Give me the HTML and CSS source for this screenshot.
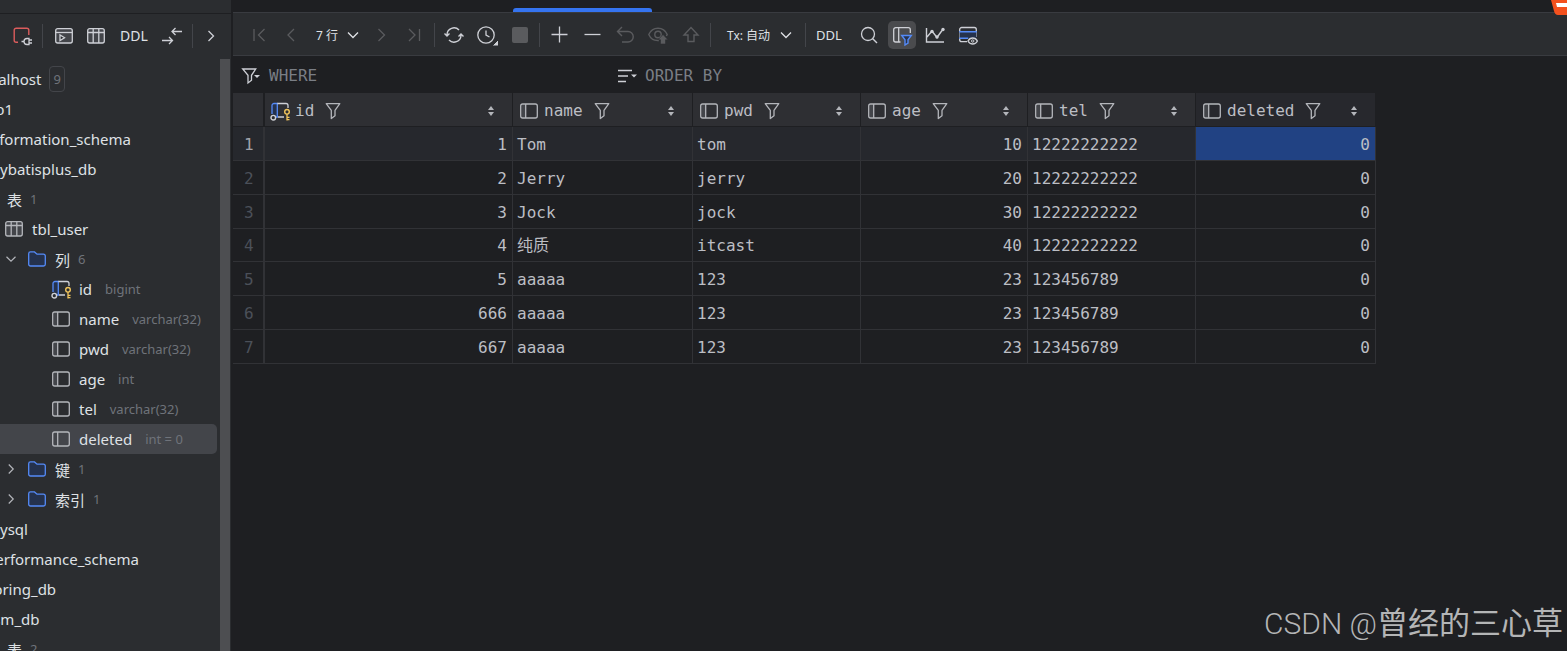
FILE: index.html
```
<!DOCTYPE html>
<html lang="zh-CN">
<head>
  <meta charset="UTF-8">
  <title>tbl_user</title>
  <link rel="stylesheet" href="styles.css">
</head>
<body>
  <svg class="sprite" aria-hidden="true">
    <symbol id="i-column" viewBox="0 0 20 20">
      <path d="M4.500 3.500H7v13H4.500a2 2 0 0 1-2-2v-9a2 2 0 0 1 2-2z" fill="#43454a"/>
      <rect x="1.700" y="3" width="16.600" height="14" rx="2" fill="none" stroke="currentColor" stroke-width="1.300"/>
      <path d="M6.700 3v14" stroke="currentColor" stroke-width="1.300"/>
    </symbol>
    <symbol id="i-key-column" viewBox="0 0 20 20">
      <path d="M2 13V4.500A2 2 0 0 1 4 2.500h3.300V16H6" fill="#25324d" stroke="#548af7" stroke-width="1.300"/>
      <path d="M7.300 2.500H16a2 2 0 0 1 2 2V7M8 16h6" fill="none" stroke="#ced0d6" stroke-width="1.300"/>
      <circle cx="3.300" cy="16.700" r="2.300" fill="#2b2d30" stroke="#ced0d6" stroke-width="1.400"/>
      <path d="M17 13v6.500M17 16.300h2.500M17 18.700h2.500" fill="none" stroke="#f2c55c" stroke-width="1.300"/>
      <circle cx="17" cy="10.800" r="2.300" fill="#2b2d30" stroke="#f2c55c" stroke-width="1.400"/>
    </symbol>
    <symbol id="i-table" viewBox="0 0 20 20">
      <rect x="1.700" y="2.700" width="16.600" height="14.300" rx="2" fill="#43454a" stroke="currentColor" stroke-width="1.300"/>
      <path d="M2 6.500h16M7.200 3v14M12.800 3v14" stroke="currentColor" stroke-width="1.300"/>
    </symbol>
    <symbol id="i-folder" viewBox="0 0 20 20">
      <path d="M1.700 4.700a1.800 1.800 0 0 1 1.800-1.800h4L10 5.200h6.500A1.800 1.800 0 0 1 18.300 7v8.200a1.800 1.800 0 0 1-1.800 1.800h-13a1.800 1.800 0 0 1-1.800-1.800z" fill="#25324d" stroke="#548af7" stroke-width="1.300"/>
    </symbol>
    <symbol id="i-down" viewBox="0 0 20 20">
      <path d="M5 7.500l5 5 5-5" fill="none" stroke="currentColor" stroke-width="1.300"/>
    </symbol>
    <symbol id="i-right" viewBox="0 0 20 20">
      <path d="M7.500 5l5 5-5 5" fill="none" stroke="currentColor" stroke-width="1.300"/>
    </symbol>
    <symbol id="i-prev" viewBox="0 0 20 20">
      <path d="M12 4l-6 6 6 6" fill="none" stroke="currentColor" stroke-width="1.300"/>
    </symbol>
    <symbol id="i-next" viewBox="0 0 20 20">
      <path d="M6.500 4l6 6-6 6" fill="none" stroke="currentColor" stroke-width="1.300"/>
    </symbol>
    <symbol id="i-first" viewBox="0 0 20 20">
      <path d="M5 4v12M15.500 4l-6 6 6 6" fill="none" stroke="currentColor" stroke-width="1.300"/>
    </symbol>
    <symbol id="i-last" viewBox="0 0 20 20">
      <path d="M14.500 4v12M4 4l6 6-6 6" fill="none" stroke="currentColor" stroke-width="1.300"/>
    </symbol>
    <symbol id="i-filter" viewBox="0 0 20 20">
      <path d="M3.200 2.700h13.600L12 9.300v5.500L8.300 17.500V9.300z" fill="none" stroke="currentColor" stroke-width="1.300" stroke-linejoin="round"/>
    </symbol>
    <symbol id="i-sort" viewBox="0 0 8 12">
      <path d="M4 1l3 4H1zM4 11l3-4H1z" fill="currentColor"/>
    </symbol>
  </svg>

  <div class="app">
    <aside class="sidebar">
      <div class="side-head"></div>
      <div class="side-toolbar">
        <button class="tool" aria-label="断开连接"><svg viewBox="0 0 20 20"><path d="M6 16.300H4.200a2 2 0 0 1-2-2V4.200a2 2 0 0 1 2-2h10.600a2 2 0 0 1 2 2V9" fill="none" stroke="#db5c5c" stroke-width="1.400"/><path d="M17 12.500h-2a3 3 0 0 0 0 6h2zM17 14h3M17 17h3M12 15.500H9.500" fill="none" stroke="#ced0d6" stroke-width="1.300"/></svg></button>
        <span class="sep"></span>
        <button class="tool" aria-label="查询控制台"><svg viewBox="0 0 20 20"><rect x="1.700" y="2.700" width="16.600" height="14.300" rx="2" fill="#43454a" stroke="#ced0d6" stroke-width="1.300"/><path d="M2 6.500h16" stroke="#ced0d6" stroke-width="1.300"/><path d="M6 9v5.500l4.500-2.700z" fill="#2b2d30" stroke="#ced0d6" stroke-width="1.300"/></svg></button>
        <button class="tool" aria-label="表"><svg><use href="#i-table"/></svg></button>
        <button class="tool ddl">DDL</button>
        <button class="tool" aria-label="跳转"><svg viewBox="0 0 20 20"><path d="M20 5.500h-10M13.500 2L10 5.500 13.500 9M0 14.500h10.500M7 11l3.500 3.500L7 18" fill="none" stroke="#ced0d6" stroke-width="1.300"/></svg></button>
        <span class="sep"></span>
        <button class="tool more" aria-label="更多"><svg><use href="#i-right"/></svg></button>
      </div>
      <div class="side-body">
        <ul class="tree">
          <li class="host">localhost <span class="badge">9</span></li>
          <li class="schema">db1</li>
          <li class="schema">information_schema</li>
          <li class="schema">mybatisplus_db</li>
          <li class="group">表 <span class="count">1</span></li>
          <li class="table"><svg><use href="#i-table"/></svg>tbl_user</li>
          <li class="folder"><svg class="arrow"><use href="#i-down"/></svg><svg><use href="#i-folder"/></svg>列 <span class="count">6</span></li>
          <li class="column"><svg><use href="#i-key-column"/></svg>id <span class="type">bigint</span></li>
          <li class="column"><svg><use href="#i-column"/></svg>name <span class="type">varchar(32)</span></li>
          <li class="column"><svg><use href="#i-column"/></svg>pwd <span class="type">varchar(32)</span></li>
          <li class="column"><svg><use href="#i-column"/></svg>age <span class="type">int</span></li>
          <li class="column"><svg><use href="#i-column"/></svg>tel <span class="type">varchar(32)</span></li>
          <li class="column selected"><svg><use href="#i-column"/></svg>deleted <span class="type">int = 0</span></li>
          <li class="folder"><svg class="arrow"><use href="#i-right"/></svg><svg><use href="#i-folder"/></svg>键 <span class="count">1</span></li>
          <li class="folder"><svg class="arrow"><use href="#i-right"/></svg><svg><use href="#i-folder"/></svg>索引 <span class="count">1</span></li>
          <li class="schema">mysql</li>
          <li class="schema">performance_schema</li>
          <li class="schema">spring_db</li>
          <li class="schema">ssm_db</li>
          <li class="group">表 <span class="count">2</span></li>
        </ul>
        <div class="scrollbar"></div>
      </div>
    </aside>

    <main class="main">
      <div class="tabs"><span class="tab-line"></span></div>
      <div class="toolbar">
        <button class="tool" disabled aria-label="第一页"><svg><use href="#i-first"/></svg></button>
        <button class="tool" disabled aria-label="上一页"><svg><use href="#i-prev"/></svg></button>
        <button class="tool rows">7 行<svg><use href="#i-down"/></svg></button>
        <button class="tool" disabled aria-label="下一页"><svg><use href="#i-next"/></svg></button>
        <button class="tool" disabled aria-label="最后一页"><svg><use href="#i-last"/></svg></button>
        <span class="sep"></span>
        <button class="tool" aria-label="刷新"><svg viewBox="0 0 20 20"><path d="M3 11V9.500a7 7 0 0 1 12-4.500M17 9v1.500a7 7 0 0 1-12 4.500M.500 8.500L3 11l2.500-2.500M14.500 11.500L17 9l2.500 2.500" fill="none" stroke="currentColor" stroke-width="1.400"/></svg></button>
        <button class="tool" aria-label="历史"><svg viewBox="0 0 20 20"><circle cx="9" cy="10" r="8.200" fill="none" stroke="currentColor" stroke-width="1.300"/><path d="M9 5.500V10l3.500 2" fill="none" stroke="currentColor" stroke-width="1.300"/><path d="M21.500 14.500v6.500h-6.500z" fill="currentColor" stroke="#2b2d30"/></svg></button>
        <button class="tool" disabled aria-label="停止"><svg viewBox="0 0 20 20"><rect x="2" y="2" width="16" height="16" rx="2" fill="currentColor"/></svg></button>
        <span class="sep"></span>
        <button class="tool" aria-label="添加行"><svg viewBox="0 0 20 20"><path d="M10.500 1.500v16M2.500 9.500h16" stroke="currentColor" stroke-width="1.300"/></svg></button>
        <button class="tool" aria-label="删除行"><svg viewBox="0 0 20 20"><path d="M2.500 9.500h16" stroke="currentColor" stroke-width="1.300"/></svg></button>
        <button class="tool" disabled aria-label="还原"><svg viewBox="0 0 20 20"><path d="M7 2L2.500 6.500 7 11M2.500 6.500H13a5 5 0 0 1 0 10.500H7" fill="none" stroke="currentColor" stroke-width="1.400"/></svg></button>
        <button class="tool" disabled aria-label="预览更改"><svg viewBox="0 0 20 20"><path d="M11 15.500C6 16 2.500 13.500.800 9.500 2.500 5.500 6 3.200 10 3.200s7.500 2.300 9.200 6.300l-.800 1.500" fill="none" stroke="currentColor" stroke-width="1.400"/><circle cx="10" cy="9.500" r="3.200" fill="none" stroke="currentColor" stroke-width="1.400"/><path d="M15 9.500l5 5.300h-2.500V19h-5v-4.200H10z" fill="currentColor" stroke="#2b2d30" stroke-width=".600"/></svg></button>
        <button class="tool" disabled aria-label="提交"><svg viewBox="0 0 20 20"><path d="M10 2.500l7 7.500h-4v6.500H7V10H3z" fill="none" stroke="currentColor" stroke-width="1.400"/></svg></button>
        <span class="sep"></span>
        <button class="tool tx">Tx: 自动<svg><use href="#i-down"/></svg></button>
        <span class="sep"></span>
        <button class="tool ddl">DDL</button>
        <button class="tool" aria-label="搜索"><svg viewBox="0 0 20 20"><circle cx="9" cy="9" r="6.500" fill="none" stroke="currentColor" stroke-width="1.300"/><path d="M13.500 13.500l4.500 4.500" stroke="currentColor" stroke-width="1.400"/></svg></button>
        <button class="tool active" aria-label="筛选"><svg viewBox="0 0 20 20"><path d="M8.500 17H3.700a2 2 0 0 1-2-2V4.700a2 2 0 0 1 2-2h12.600a2 2 0 0 1 2 2V8M6.700 2.700V17" fill="none" stroke="currentColor" stroke-width="1.300"/><path d="M9.700 10.500h9.600L16 14.800v3.400L13 20v-5.200z" fill="#25324d" stroke="#548af7" stroke-width="1.400"/></svg></button>
        <button class="tool" aria-label="图表"><svg viewBox="0 0 20 20"><path d="M1.500 3v14H19M2 12l5-6 5 6.500 5-7" fill="none" stroke="currentColor" stroke-width="1.400"/><circle cx="7" cy="6.500" r="1.700" fill="currentColor"/><circle cx="12" cy="12" r="1.700" fill="currentColor"/><circle cx="18" cy="4.500" r="1.700" fill="currentColor"/></svg></button>
        <button class="tool" aria-label="查看设置"><svg viewBox="0 0 20 20"><path d="M9 16.700H3.700a2 2 0 0 1-2-2V4.500a2 2 0 0 1 2-2h12.600a2 2 0 0 1 2 2V12" fill="none" stroke="currentColor" stroke-width="1.300"/><path d="M1.500 6.700h17v6.500h-17z" fill="#25324d"/><path d="M1.200 6.700h17.600M1.200 13.200h9" stroke="#548af7" stroke-width="1.400"/><path d="M10 16c1-2 2.700-3 4.700-3s3.700 1 4.700 3c-1 2-2.700 3-4.700 3s-3.700-1-4.700-3z" fill="#2b2d30" stroke="currentColor" stroke-width="1.300"/><circle cx="14.700" cy="16" r="1.200" fill="none" stroke="currentColor"/></svg></button>
      </div>

      <div class="query">
        <div class="query-part where">
          <svg viewBox="0 0 20 20"><path d="M1.700 3h13L10.500 9.300v5L7 17V9.300z" fill="none" stroke="currentColor" stroke-width="1.300"/><path d="M13 9h6l-3 3z" fill="currentColor"/></svg>
          <label for="where">WHERE</label>
          <input type="text" id="where">
        </div>
        <div class="query-part">
          <svg viewBox="0 0 20 20"><path d="M1 4.500h14M1 10h10M1 15.500h8" stroke="currentColor" stroke-width="1.400"/><path d="M14 8.500h6l-3 3z" fill="currentColor"/></svg>
          <label for="order">ORDER BY</label>
          <input type="text" id="order">
        </div>
      </div>

      <table class="grid">
        <colgroup>
          <col class="c-num"><col class="c-id"><col class="c-name"><col class="c-pwd"><col class="c-age"><col class="c-tel"><col class="c-deleted">
        </colgroup>
        <thead>
          <tr>
            <th></th>
            <th><div class="head key"><svg><use href="#i-key-column"/></svg>id<svg class="filter"><use href="#i-filter"/></svg><svg class="sort"><use href="#i-sort"/></svg></div></th>
            <th><div class="head"><svg><use href="#i-column"/></svg>name<svg class="filter"><use href="#i-filter"/></svg><svg class="sort"><use href="#i-sort"/></svg></div></th>
            <th><div class="head"><svg><use href="#i-column"/></svg>pwd<svg class="filter"><use href="#i-filter"/></svg><svg class="sort"><use href="#i-sort"/></svg></div></th>
            <th><div class="head"><svg><use href="#i-column"/></svg>age<svg class="filter"><use href="#i-filter"/></svg><svg class="sort"><use href="#i-sort"/></svg></div></th>
            <th><div class="head"><svg><use href="#i-column"/></svg>tel<svg class="filter"><use href="#i-filter"/></svg><svg class="sort"><use href="#i-sort"/></svg></div></th>
            <th class="current"><div class="head"><svg><use href="#i-column"/></svg>deleted<svg class="filter"><use href="#i-filter"/></svg><svg class="sort"><use href="#i-sort"/></svg></div></th>
          </tr>
        </thead>
        <tbody>
          <tr class="current"><th>1</th><td class="num">1</td><td>Tom</td><td>tom</td><td class="num">10</td><td>12222222222</td><td class="num picked">0</td></tr>
          <tr><th>2</th><td class="num">2</td><td>Jerry</td><td>jerry</td><td class="num">20</td><td>12222222222</td><td class="num">0</td></tr>
          <tr><th>3</th><td class="num">3</td><td>Jock</td><td>jock</td><td class="num">30</td><td>12222222222</td><td class="num">0</td></tr>
          <tr><th>4</th><td class="num">4</td><td>纯质</td><td>itcast</td><td class="num">40</td><td>12222222222</td><td class="num">0</td></tr>
          <tr><th>5</th><td class="num">5</td><td>aaaaa</td><td>123</td><td class="num">23</td><td>123456789</td><td class="num">0</td></tr>
          <tr><th>6</th><td class="num">666</td><td>aaaaa</td><td>123</td><td class="num">23</td><td>123456789</td><td class="num">0</td></tr>
          <tr><th>7</th><td class="num">667</td><td>aaaaa</td><td>123</td><td class="num">23</td><td>123456789</td><td class="num">0</td></tr>
        </tbody>
      </table>
    </main>
  </div>

  <svg class="corner" viewBox="0 0 16 15" aria-hidden="true"><path d="M0 0h16v15H7q-3 0-4-4z" fill="#f4511e"/><path d="M5 3h11v4H6z" fill="#fff"/></svg>
  <div class="watermark"><span>CSDN @</span>曾经的三心草</div>
</body>
</html>
```
FILE: styles.css
```
* {
  box-sizing: border-box;
}
body {
  margin: 0;
  background: #1e1f22;
  color: #dfe1e5;
  font-family: "Noto Sans", "Noto Sans CJK SC", sans-serif;
  font-size: 15px;
  overflow: hidden;
}
svg {
  width: 20px;
  height: 20px;
  flex: none;
  overflow: visible;
}
.sprite {
  position: absolute;
  width: 0;
  height: 0;
}
.app {
  display: flex;
  height: 100vh;
}

/* database tree */
.sidebar {
  flex: 0 0 233px;
  display: flex;
  flex-direction: column;
  background: #2b2d30;
  border-right: 2px solid #1e1f22;
  overflow: hidden;
}
.side-head {
  flex: none;
  height: 14px;
  border-bottom: 1px solid #1e1f22;
}
.side-toolbar {
  flex: none;
  display: flex;
  align-items: center;
  gap: 4px;
  height: 45px;
  padding: 0 0 2px 8px;
}
.side-body {
  flex: 1;
  display: flex;
  min-height: 0;
}
.tree {
  flex: 1;
  min-width: 0;
  margin: 0;
  padding: 5px 3px 0 0;
  list-style: none;
  overflow: hidden;
}
.tree li {
  display: flex;
  align-items: center;
  height: 30px;
  white-space: nowrap;
}
.tree svg {
  color: #b4b6bb;
  margin-right: 8px;
}
.tree svg.arrow {
  width: 18px;
  height: 18px;
  margin-right: 7px;
}
.tree .host {
  margin-left: -22px;
}
.tree .schema {
  margin-left: -14px;
}
.tree .group {
  padding-left: 7px;
}
.tree .table {
  padding-left: 4px;
}
.tree .folder {
  padding-left: 2px;
}
.tree .column {
  padding-left: 51px;
}
.tree .selected {
  background: #43454a;
  border-radius: 0 5px 5px 0;
}
.type,
.count {
  color: #6f737a;
  font-size: 13px;
}
.type {
  margin-left: 13px;
}
.count {
  margin-left: 8px;
}
.badge {
  margin-left: 8px;
  padding: 0 3px;
  border: 1px solid #43454a;
  border-radius: 4px;
  color: #6f737a;
  font-size: 13px;
  line-height: 24px;
}
.scrollbar {
  width: 10px;
  margin-right: 1px;
  background: #4d4e51;
}

/* toolbars */
.tool {
  display: flex;
  align-items: center;
  justify-content: center;
  flex: none;
  width: 28px;
  height: 28px;
  padding: 0;
  border: none;
  border-radius: 5px;
  background: none;
  color: #ced0d6;
  font: 13px "Noto Sans", "Noto Sans CJK SC", sans-serif;
  white-space: nowrap;
}
.tool:disabled {
  color: #5a5b5e;
}
.tool.active {
  background: #4a4b4e;
}
.sep {
  flex: none;
  width: 1px;
  height: 24px;
  background: #43454a;
}
.side-toolbar .sep {
  margin: 0 3px 0 2px;
}
.side-toolbar .ddl {
  width: 40px;
  color: #dfe1e5;
  font-size: 14px;
}
.side-toolbar .more {
  width: 22px;
}
.main {
  flex: 1;
  min-width: 0;
}
.tabs {
  display: flex;
  align-items: flex-end;
  height: 13px;
  padding-left: 280px;
  border-bottom: 1px solid #393b40;
}
.tab-line {
  width: 139px;
  height: 4px;
  border-radius: 3px 3px 0 0;
  background: #3574f0;
}
.toolbar {
  display: flex;
  align-items: center;
  gap: 5px;
  height: 43px;
  padding: 2px 0 0 12px;
  background: #2b2d30;
  border-bottom: 1px solid #393b40;
}
.toolbar .rows,
.toolbar .tx {
  justify-content: space-between;
  color: #dfe1e5;
  font-size: 12px;
}
.toolbar .rows {
  width: 52px;
  padding-left: 5px;
}
.toolbar .tx {
  width: 84px;
  padding: 0 4px 0 11px;
}
.toolbar .ddl {
  width: 39px;
  padding-right: 3px;
  color: #dfe1e5;
}

/* where / order by */
.query {
  display: flex;
  height: 37px;
  padding: 2px 0 0 8px;
  color: #ced0d6;
  font: 16px "DejaVu Sans Mono", monospace;
}
.query-part {
  flex: 1;
  display: flex;
  align-items: center;
  gap: 8px;
}
.query-part.where {
  flex: 0 0 376px;
}
.query label {
  color: #7a7e85;
}
.query input {
  flex: 1;
  min-width: 0;
  border: none;
  outline: none;
  background: none;
  color: #bcbec4;
  font: inherit;
}

/* data grid */
.grid {
  width: 1143px;
  table-layout: fixed;
  border-collapse: separate;
  border-spacing: 0;
  color: #bcbec4;
  font: 16px "DejaVu Sans Mono", "Noto Sans CJK SC", monospace;
  line-height: 20px;
}
.c-num { width: 32px; }
.c-id { width: 248px; }
.c-name { width: 180px; }
.c-pwd { width: 168px; }
.c-age { width: 167px; }
.c-tel { width: 168px; }
.c-deleted { width: 180px; }
.grid th,
.grid td {
  padding: 2px 4px 0;
  font-weight: normal;
  text-align: left;
  border-right: 1px solid #313236;
  border-bottom: 1px solid #313236;
}
.grid thead th {
  height: 34px;
  padding: 2px 0 0;
  background: #2e2f33;
  border-color: #1e1f22;
}
.grid thead th.current {
  background: #27282d;
}
.grid tr > th:first-child {
  border-right-width: 2px;
}
.head {
  display: flex;
  align-items: center;
  padding: 0 17px 0 6px;
}
.head svg {
  margin-right: 5px;
  color: #b4b6bb;
}
.head.key {
  padding-left: 5px;
}
.head svg.filter {
  margin: 0 0 0 9px;
}
.head svg.sort {
  width: 8px;
  height: 12px;
  margin: 0 0 0 auto;
}
.grid tbody tr {
  height: 34px;
}
.grid tbody tr:nth-child(4n) {
  height: 33px;
}
.grid tbody th {
  padding: 2px 4px 0 11px;
  color: #4b5059;
}
.grid .num {
  padding-right: 5px;
  text-align: right;
}
.grid tbody tr.current {
  background: #26282d;
}
.grid tbody tr.current th {
  color: #a1a3ab;
}
.grid td.picked {
  background: #214283;
}

.corner {
  position: absolute;
  top: 0;
  right: 0;
  width: 16px;
  height: 15px;
}
.watermark {
  position: absolute;
  right: 4px;
  bottom: 8px;
  color: #b4b5b6;
  font: 31px "Noto Sans CJK SC", sans-serif;
  line-height: 44px;
}
.watermark span {
  font: 300 30px Roboto, sans-serif;
}
```
